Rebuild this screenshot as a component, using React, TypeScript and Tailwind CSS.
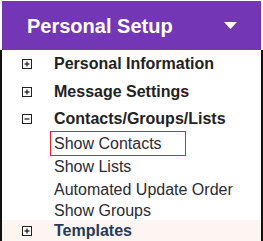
const menu = [
  { label: "Personal Information", open: false },
  { label: "Message Settings", open: false },
  { label: "Contacts/Groups/Lists", open: true },
];

const subItems = ["Show Contacts", "Show Lists", "Automated Update Order", "Show Groups"];

const ToggleBox = ({ open }: { open: boolean }) => (
  <svg width="10" height="10" viewBox="0 0 10 10" className="shrink-0">
    <rect x="0.5" y="0.5" width="9" height="9" fill="white" stroke="#222" />
    <path d="M2.5 5h5" stroke="#111" strokeWidth="1.2" />
    {!open && <path d="M5 2.5v5" stroke="#111" strokeWidth="1.2" />}
  </svg>
);

export default function App() {
  return (
    <div className="w-[263px] h-[241px] overflow-hidden bg-white font-['Liberation_Sans',Arial,sans-serif]">
      <div className="ml-[2px] mt-[1px] w-[259px] h-[49px] bg-[#7337b5] flex items-center justify-between pl-[25px] pr-[24px]">
        <span className="text-white font-bold text-[20px] leading-none">Personal Setup</span>
        <svg width="13" height="7" viewBox="0 0 13 7">
          <path d="M0 0h13L6.5 7z" fill="white" />
        </svg>
      </div>

      <div className="border-l-2 border-r-2 border-[#111] h-[191px]">
        {menu.map((item) => (
          <div
            key={item.label}
            className={`flex items-center pl-[20px] ${item.open ? "h-[26px]" : "h-[28px]"}`}
          >
            <ToggleBox open={item.open} />
            <span className="ml-[22px] text-[16px] font-bold text-[#222] leading-none">
              {item.label}
            </span>
          </div>
        ))}

        <ul>
          {subItems.map((sub, i) => (
            <li
              key={sub}
              className={`flex items-center pl-[49px] ${i === subItems.length - 1 ? "h-[19px]" : "h-[23px]"}`}
            >
              <span
                className={`text-[16px] text-[#2a2a35] leading-none ${
                  i === 0 ? "w-[134px] h-[23px] flex items-center pl-[3px] outline outline-1 outline-[#e8202a]" : "pl-[3px]"
                }`}
              >
                {sub}
              </span>
            </li>
          ))}
        </ul>

        <div className="flex items-center h-[22px] pl-[20px] bg-[#fdf5f1]">
          <ToggleBox open={false} />
          <span className="ml-[22px] text-[16px] font-bold text-[#233a5e] leading-none">Templates</span>
        </div>
      </div>
    </div>
  );
}
